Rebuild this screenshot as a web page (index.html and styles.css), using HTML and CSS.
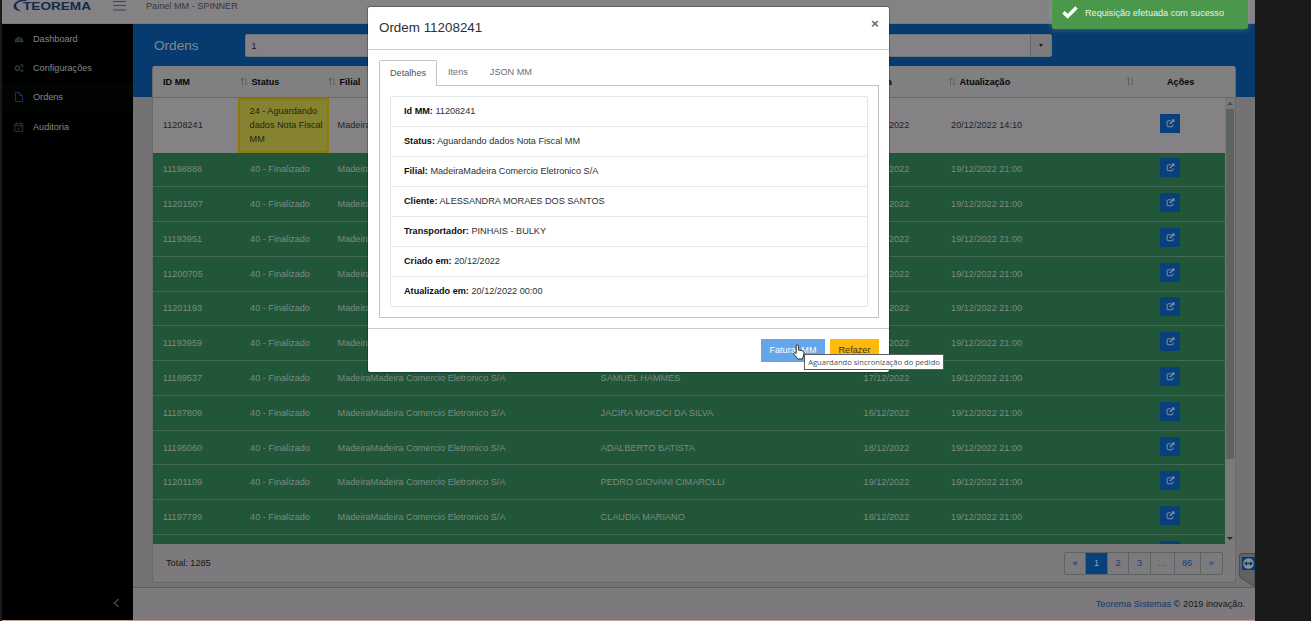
FILE: index.html
```
<!DOCTYPE html>
<html lang="pt-BR">
<head>
  <meta charset="UTF-8">
  <meta name="viewport" content="width=device-width, initial-scale=1.0">
  <title>Painel MM</title>
  <link rel="stylesheet" href="styles.css">
</head>
<body>
  <svg class="sprite">
    <symbol id="i-sort" viewBox="0 0 8 9">
      <path d="M2.5 8.5V1M1 2.6 2.5 1 4 2.6" fill="none" stroke="#505352" stroke-width=".7"/>
      <path d="M6 .5V8M4.6 6.4 6 8l1.4-1.6" fill="none" stroke="#5d605f" stroke-width=".7"/>
    </symbol>
    <symbol id="i-open" viewBox="0 0 10 10">
      <path d="M5.5 2H2.3Q1.3 2 1.3 3v4.6q0 1 1 1h4.4q1 0 1-1V6" fill="none" stroke="currentColor" stroke-width="1"/>
      <path d="M6 .6h3.4V4L8.2 2.8 4.8 6.2 3.8 5.2 7.2 1.8z" fill="currentColor"/>
    </symbol>
  </svg>

  <div class="app">
    <header class="topbar">
      <div class="brand">
        <svg class="swoosh" width="14" height="14" viewBox="0 0 14 14"><path d="M13.5 0C6 -1 1 2 .6 6c-.2 2.8 2.6 4.8 8 5.4C5 9.500 3 8 3.200 5.500 3.500 2.500 7.500 .8 13.500 1z" fill="#13294d"/></svg>
        <svg class="wordmark" width="69" height="12" viewBox="0 0 69 12"><text x="0" y="10" textLength="68" lengthAdjust="spacingAndGlyphs">TEOREMA</text></svg>
      </div>
      <svg class="menu" width="13" height="11" viewBox="0 0 13 11"><path d="M0 1.500h13M0 5.500h13M0 10h13" stroke="#3f474a" stroke-width="1"/></svg>
      <span class="panel-name">Painel MM - SPINNER</span>
    </header>

    <div class="middle">
      <nav class="sidebar">
        <a class="nav-item">
          <svg width="10" height="10" viewBox="0 0 10 10"><path d="M.8 8.300a4.300 4.300 0 1 1 8.400 0z" fill="#2a3d42"/><path d="M5 7.300 6 4M2 6.200h1M3 3.800l.6.600M7 6.200h1" stroke="#000" stroke-width=".9"/></svg>
          <span>Dashboard</span>
        </a>
        <a class="nav-item">
          <svg width="10" height="10" viewBox="0 0 10 10" fill="none" stroke="#2a3d42"><circle cx="3.400" cy="5.200" r="2.100" stroke-width="1.300"/><path d="M3.400 2v1M3.400 7.400v1M.2 5.200h1M5.600 5.200h1"/><circle cx="8" cy="2.500" r="1.100"/><circle cx="8" cy="7.800" r="1.100"/></svg>
          <span>Configurações</span>
        </a>
        <a class="nav-item active">
          <svg width="10" height="10" viewBox="0 0 10 10"><path d="M1.500.5h4.200l2.800 2.800v6.200h-7zM5.500.5v3h3" fill="none" stroke="#14315f"/></svg>
          <span>Ordens</span>
        </a>
        <a class="nav-item">
          <svg width="10" height="10" viewBox="0 0 10 10"><path d="M.7 1.800h8v7.500h-8zM.7 3.800h8M2.700.3v2M6.700.3v2M3 6.300l1.300 1.300 2.300-2.200" fill="none" stroke="#2b3b3f" stroke-width=".9"/></svg>
          <span>Auditoria</span>
        </a>
        <svg class="collapse" width="8" height="10" viewBox="0 0 8 10"><path d="M6.500 1 2.500 5l4 4" fill="none" stroke="#35444a" stroke-width="1.700"/></svg>
      </nav>

      <main class="content">
        <div class="hero">
          <h1>Ordens</h1>
          <div class="select">
            <span class="select-value">1</span>
            <span class="select-arrow"></span>
          </div>
        </div>

        <section class="card">
          <div class="grid-head">
            <div>ID MM<svg class="sort"><use href="#i-sort"/></svg></div>
            <div>Status<svg class="sort"><use href="#i-sort"/></svg></div>
            <div>Filial<svg class="sort"><use href="#i-sort"/></svg></div>
            <div>Cliente<svg class="sort"><use href="#i-sort"/></svg></div>
            <div>Data<svg class="sort"><use href="#i-sort"/></svg></div>
            <div>Atualização<svg class="sort"><use href="#i-sort"/></svg></div>
            <div>Ações</div>
          </div>
          <div class="grid-wrap">
            <div class="grid-body" id="rows"></div>
            <div class="scrollbar">
              <i class="up"></i>
              <div class="thumb"></div>
              <i class="down"></i>
            </div>
          </div>
          <div class="card-footer">
            <span>Total: 1285</span>
            <div class="pages">
              <a class="dark">«</a><a class="current">1</a><a>2</a><a>3</a><a class="dots">...</a><a class="wide">86</a><a>»</a>
            </div>
          </div>
        </section>

        <footer class="footer"><a>Teorema Sistemas</a>&nbsp;© 2019 inovação.</footer>
      </main>
    </div>
  </div>

  <svg class="remote-tab" width="16" height="34" viewBox="0 0 16 34">
    <path d="M3 .5h13v33L3.500 26Q.5 24 .5 22V3q0-2.500 2.500-2.500z" fill="#5f6263" stroke="#474a4b"/>
    <path d="M3 4h13v13H3z" fill="#0a3c70"/>
    <circle cx="9.500" cy="10.500" r="5.300" fill="#8b9294"/>
    <path d="M5 10.500 8 8v1.700h3V8l3 2.500-3 2.500v-1.700H8V13z" fill="#0a3c70"/>
  </svg>

  <div class="modal">
    <div class="modal-header">
      <h2>Ordem 11208241</h2>
      <span class="close">×</span>
    </div>
    <div class="modal-body">
      <div class="tabs">
        <a class="tab active">Detalhes</a>
        <a class="tab">Itens</a>
        <a class="tab">JSON MM</a>
      </div>
      <div class="tab-content">
        <ul class="details">
          <li><b>Id MM:</b> 11208241</li>
          <li><b>Status:</b> Aguardando dados Nota Fiscal MM</li>
          <li><b>Filial:</b> MadeiraMadeira Comercio Eletronico S/A</li>
          <li><b>Cliente:</b> ALESSANDRA MORAES DOS SANTOS</li>
          <li><b>Transportador:</b> PINHAIS - BULKY</li>
          <li><b>Criado em:</b> 20/12/2022</li>
          <li><b>Atualizado em:</b> 20/12/2022 00:00</li>
        </ul>
      </div>
    </div>
    <div class="modal-footer">
      <button class="btn btn-primary">Faturar MM</button>
      <button class="btn btn-warning">Refazer</button>
    </div>
  </div>

  <div class="tooltip">Aguardando sincronização do pedido</div>
  <svg class="cursor" width="12" height="16" viewBox="0 0 12 16"><path d="M3.200 9.500V2q0-1.300 1.100-1.300T5.400 2v4l4.300.9q1.500.4 1.300 2L10.300 13l-1 2H4.700L1 10.300Q.3 9 1.500 8.600q.9-.2 1.700.9z" fill="#fff" stroke="#222" stroke-width=".9"/></svg>

  <div class="toast">
    <svg width="16" height="13" viewBox="0 0 16 13"><path d="M1.500 6.300 5.600 10.300 14.500 1.500" fill="none" stroke="#fff" stroke-width="3.400"/></svg>
    <span>Requisição efetuada com sucesso</span>
  </div>

  <script>
    const filial = 'MadeiraMadeira Comercio Eletronico S/A';
    const ordens = [
      ['11208241', '24 - Aguardando dados Nota Fiscal MM', '', '20/12/2022', '20/12/2022 14:10'],
      ['11198886', '40 - Finalizado', '', '19/12/2022', '19/12/2022 21:00'],
      ['11201507', '40 - Finalizado', '', '19/12/2022', '19/12/2022 21:00'],
      ['11193951', '40 - Finalizado', '', '19/12/2022', '19/12/2022 21:00'],
      ['11200705', '40 - Finalizado', '', '19/12/2022', '19/12/2022 21:00'],
      ['11201193', '40 - Finalizado', '', '19/12/2022', '19/12/2022 21:00'],
      ['11193959', '40 - Finalizado', '', '19/12/2022', '19/12/2022 21:00'],
      ['11189537', '40 - Finalizado', 'SAMUEL HAMMES', '17/12/2022', '19/12/2022 21:00'],
      ['11187809', '40 - Finalizado', 'JACIRA MOKDCI DA SILVA', '16/12/2022', '19/12/2022 21:00'],
      ['11195060', '40 - Finalizado', 'ADALBERTO BATISTA', '18/12/2022', '19/12/2022 21:00'],
      ['11201109', '40 - Finalizado', 'PEDRO GIOVANI CIMAROLLI', '19/12/2022', '19/12/2022 21:00'],
      ['11197799', '40 - Finalizado', 'CLAUDIA MARIANO', '18/12/2022', '19/12/2022 21:00'],
      ['', '', '', '', '']
    ];

    document.getElementById('rows').innerHTML = ordens.map(([id, status, cliente, data, atualizacao], i) => `
      <div class="row ${i === 0 ? 'waiting' : 'done'}">
        <div>${id}</div>
        <div class="status">${status}</div>
        <div>${id ? filial : ''}</div>
        <div>${cliente}</div>
        <div>${data}</div>
        <div>${atualizacao}</div>
        <div class="actions"><a class="open"><svg width="9" height="9"><use href="#i-open"/></svg></a></div>
      </div>`).join('');
  </script>
</body>
</html>
```
FILE: styles.css
```
* {
  box-sizing: border-box;
}
body {
  margin: 0;
  height: 621px;
  overflow: hidden;
  background: #1a1a1a;
  font-family: "Liberation Sans", Arial, sans-serif;
  font-size: 9.15px;
  line-height: 14px;
  color: #17191a;
}
.sprite {
  position: absolute;
  width: 0;
  height: 0;
}
.app {
  width: 1253px;
  height: 621px;
  margin-left: 2px;
  display: flex;
  flex-direction: column;
  background: #747274;
  border-bottom: 1px solid #c9a19c;
}

/* topbar */
.topbar {
  height: 24px;
  flex: none;
  display: flex;
  align-items: flex-start;
  background: #848284;
  border-bottom: 1px solid #75787a;
}
.brand {
  display: flex;
  width: 111px;
  padding-left: 11px;
}
.swoosh {
  margin-right: -4px;
}
.wordmark text {
  font-size: 11px;
  font-weight: bold;
  fill: #13294d;
}
.menu {
  margin-right: 20px;
}
.panel-name {
  margin-top: -1px;
  color: #35393b;
}

.middle {
  flex: 1;
  min-height: 0;
  display: flex;
}
.sidebar {
  width: 131px;
  display: flex;
  flex-direction: column;
  background: #000;
  color: #858789;
}
.nav-item {
  height: 29.3px;
  padding-left: 12px;
  display: flex;
  align-items: center;
  gap: 9px;
}
.nav-item.active {
  background: #010401;
}
.collapse {
  margin: auto 13px 12px auto;
}

/* content */
.content {
  flex: 1;
  display: flex;
  flex-direction: column;
}
.hero {
  height: 73px;
  flex: none;
  padding: 10px 203px 0 21px;
  display: flex;
  align-items: flex-start;
  background: #073b6f;
}
.hero h1 {
  width: 90.5px;
  margin: 0;
  font-size: 13.6px;
  font-weight: normal;
  line-height: 24px;
  color: #83898d;
}
.select {
  flex: 1;
  height: 23px;
  display: flex;
  background: #848284;
  border: 1px solid #6d7477;
  border-radius: 2px;
}
.select-value {
  flex: 1;
  padding-left: 6px;
  line-height: 22px;
}
.select-arrow {
  width: 21px;
  display: flex;
  align-items: center;
  justify-content: center;
  border-left: 1px solid #61696b;
  background: #7c7b7d;
}
.select-arrow::after {
  content: "";
  border: 2.5px solid transparent;
  border-top: 3px solid #15191b;
  border-bottom: 0;
}

.card {
  height: 517px;
  flex: none;
  margin: -31px 19px 0 19px;
  background: #7c7a7c;
  border: 1px solid #646b69;
  border-top: 0;
  border-radius: 3px;
  overflow: hidden;
}
.grid-head {
  display: grid;
  grid-template-columns: 96px 88px 265px 267.5px 87.5px 178px 1fr;
  height: 32px;
  align-items: center;
  background: #807f81;
  border-bottom: 1px solid #626b6b;
  font-weight: bold;
  color: #050607;
}
.grid-head div {
  display: flex;
  align-items: center;
  justify-content: space-between;
  padding-left: 2.5px;
}
.grid-head div:first-child {
  padding-left: 10px;
}
.grid-head div:last-child {
  padding-left: 32px;
}
.sort {
  width: 8px;
  height: 9px;
  margin-right: 1px;
}
.grid-wrap {
  height: 446px;
  display: flex;
}
.grid-body {
  flex: 1;
  overflow: hidden;
}
.row {
  display: grid;
  grid-template-columns: 87.3px 87.5px 263px 263px 87.5px 195px 1fr;
  height: 34.77px;
  border-bottom: 1px solid #43685a;
  background: #225639;
  color: #7d8a80;
  line-height: 14px;
}
.row > div {
  display: flex;
  align-items: center;
  padding-left: 9.8px;
  white-space: nowrap;
}
.row.waiting {
  height: 54.5px;
  border: 0;
  background: #848284;
  color: #1f2223;
}
.waiting .status {
  margin-left: -2.5px;
  margin-right: -1px;
  white-space: normal;
  background: #85832f;
  border: 2px solid #91780c;
  color: #25240f;
}
.row > .actions {
  padding: 0 0 3px 24px;
}
.open {
  width: 20px;
  height: 19px;
  display: flex;
  align-items: center;
  justify-content: center;
  background: #08407e;
  color: #8d9ba8;
}
.scrollbar {
  width: 10px;
  display: flex;
  flex-direction: column;
  align-items: center;
  background: #797a7a;
}
.scrollbar i {
  border: 3px solid transparent;
}
.scrollbar .up {
  margin-top: 1px;
  border-bottom-color: #4a4d4c;
}
.thumb {
  width: 8px;
  height: 350px;
  margin-top: 4px;
  background: #5f635f;
}
.scrollbar .down {
  margin: auto 0 1px;
  border-top-color: #252827;
}
.card-footer {
  height: 38px;
  display: flex;
  align-items: center;
  justify-content: space-between;
  padding: 0 12px 0 13px;
}
.pages {
  display: flex;
  height: 23px;
  border: 1px solid #5c6463;
  border-radius: 2px;
}
.pages a {
  width: 21.4px;
  line-height: 21px;
  text-align: center;
  border-right: 1px solid #5c6463;
  color: #17407a;
}
.pages a:last-child {
  border: 0;
}
.pages .dark {
  color: #22292f;
}
.pages .current {
  background: #08407e;
  color: #9aa3aa;
}
.pages .dots {
  width: 24px;
  color: #45484b;
}
.pages .wide {
  width: 26px;
}
.footer {
  flex: 1;
  display: flex;
  align-items: center;
  justify-content: flex-end;
  margin-top: 4px;
  padding-right: 10px;
  background: #7c7a7c;
  border-top: 1px solid #56605b;
}
.footer a {
  color: #12396e;
}
.remote-tab {
  position: absolute;
  left: 1239px;
  top: 553px;
}

/* modal */
.modal {
  position: absolute;
  left: 368px;
  top: 7px;
  width: 521px;
  height: 365px;
  background: #fff;
  border-radius: 2px;
  box-shadow: 0 0 0 1px rgba(0, 0, 0, .25);
  color: #2b3034;
}
.modal-header {
  height: 43px;
  display: flex;
  align-items: center;
  justify-content: space-between;
  padding: 0 10px 0 11px;
  border-bottom: 1px solid #c8ccd1;
}
.modal-header h2 {
  margin: 0;
  font-size: 13.4px;
  font-weight: normal;
}
.close {
  margin-top: -8px;
  font-size: 13.5px;
  font-weight: bold;
  color: #6b6d6f;
}
.modal-body {
  height: 278px;
  padding: 10px;
  padding-left: 11px;
}
.tabs {
  display: flex;
}
.tab {
  height: 25px;
  padding: 0 11px;
  line-height: 25px;
  color: #62707c;
}
.tab.active {
  height: 26px;
  margin-bottom: -1px;
  padding: 0 10px;
  line-height: 24px;
  position: relative;
  background: #fff;
  border: 1px solid #bcc5cd;
  border-bottom: 0;
  border-radius: 2px 2px 0 0;
  color: #4b545b;
}
.tab-content {
  height: 233px;
  padding: 10px;
  border: 1px solid #bcc5cd;
}
.details {
  margin: 0;
  padding: 0;
  list-style: none;
  border: 1px solid #e3e5e7;
  border-radius: 2px;
}
.details li {
  height: 30px;
  padding-left: 13px;
  line-height: 29px;
  border-bottom: 1px solid #e6e8ea;
}
.details li:last-child {
  height: 29px;
  border: 0;
}
.details b {
  color: #0d0f11;
}
.modal-footer {
  height: 44px;
  display: flex;
  justify-content: flex-end;
  gap: 5px;
  padding: 10px 10px 0;
  border-top: 1px solid #c8ccd1;
}
.btn {
  height: 23px;
  padding: 0 0 1px;
  border: 0;
  font: inherit;
}
.btn-primary {
  width: 64px;
  background: #65a5e9;
  color: #fff;
}
.btn-warning {
  width: 49px;
  background: #ffb90b;
  color: #3b3212;
}
.tooltip {
  position: absolute;
  left: 804px;
  top: 354px;
  width: 140px;
  height: 16px;
  border: 1px solid #5e5e5e;
  background: #fff;
  font-family: "Open Sans", sans-serif;
  font-size: 7.6px;
  line-height: 14px;
  text-align: center;
  white-space: nowrap;
  color: #4f4f4f;
}
.cursor {
  position: absolute;
  left: 793px;
  top: 344px;
}
.toast {
  position: absolute;
  left: 1052px;
  top: 0;
  width: 196px;
  height: 29px;
  display: flex;
  align-items: center;
  gap: 7px;
  padding: 0 0 4px 10px;
  background: #4b984d;
  border-radius: 0 0 2px 2px;
  box-shadow: 0 0 6px rgba(150, 170, 180, .5);
  color: #e7f3e7;
}
```
